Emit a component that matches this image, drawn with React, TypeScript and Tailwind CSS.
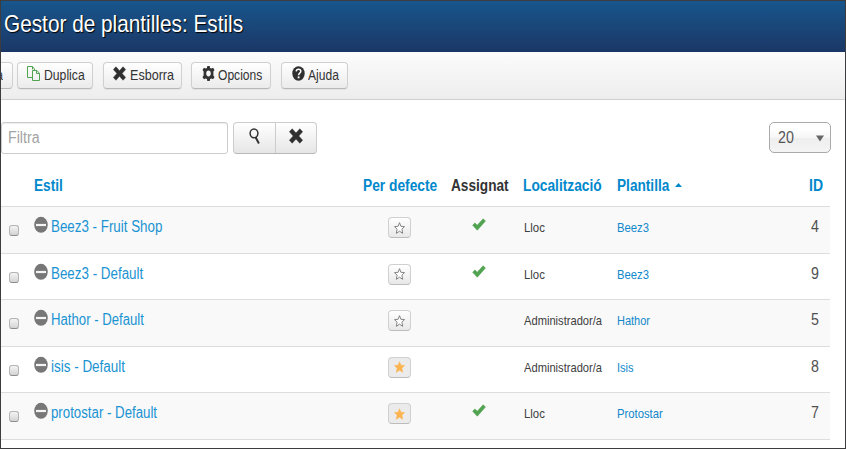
import { useLayoutEffect, useRef, useState, type ReactNode } from "react";

type FitProps = { w: number; className?: string; children: string };

// Condenses a label horizontally so that it fills the given width.
function Fit({ w, className = "", children }: FitProps) {
  const ref = useRef<HTMLSpanElement>(null);
  const [scale, setScale] = useState(0.85);
  useLayoutEffect(() => {
    if (ref.current) setScale(w / ref.current.offsetWidth);
  }, [w, children]);
  return (
    <span className={`block shrink-0 ${className}`} style={{ width: w }}>
      <span
        ref={ref}
        className="inline-block origin-left whitespace-nowrap align-top"
        style={{ transform: `scaleX(${scale})` }}
      >
        {children}
      </span>
    </span>
  );
}

const CopyIcon = () => (
  <svg className="h-[15px] w-[13px]" viewBox="0 0 13 15" fill="none" stroke="#51a351" strokeWidth="1">
    <path d="M5 11.5H.5V.5H5.5L7.5 3V4" />
    <path d="M5.5 4.5H10L12.5 7.5V14.5H5.5ZM9.5 4.5V7.5H12.5M5.5.5V3.5" />
  </svg>
);

const CrossIcon = ({ className = "" }: { className?: string }) => (
  <svg className={className} viewBox="0 0 14 16" preserveAspectRatio="none" fill="#2f2f2f">
    <path d="M3.2.8 7 5 10.8.8 13.6 3.8 9.8 8 13.6 12.2 10.8 15.2 7 11 3.2 15.2.4 12.2 4.2 8 .4 3.8Z" stroke="#2f2f2f" strokeWidth=".5" strokeLinejoin="round" />
  </svg>
);

const CogIcon = () => (
  <svg className="h-[15px] w-[13px]" viewBox="0 0 13 15" fill="#333">
    <path
      fillRule="evenodd"
      d="M5.3 0h2.4l.4 2 1.2.6 1.8-.9 1.4 2.2-1.1 1.7v3.8l1.1 1.7-1.4 2.2-1.8-.9-1.2.6-.4 2H5.3l-.4-2-1.2-.6-1.8.9L.5 11.1l1.1-1.7V5.6L.5 3.9l1.4-2.2 1.8.9L4.9 2ZM6.5 4.6C5.1 4.6 4.2 5.9 4.2 7.5S5.1 10.4 6.5 10.4 8.8 9.1 8.8 7.5 7.9 4.6 6.5 4.6Z"
    />
  </svg>
);

const HelpIcon = () => (
  <svg className="h-[15px] w-[13px]" viewBox="0 0 13 15">
    <ellipse cx="6.5" cy="7.5" rx="6.2" ry="7.3" fill="#2f2f2f" />
    <path d="M4.2 5.4C4.3 3.8 5.3 3.2 6.600 3.2 8 3.2 8.8 4 8.8 5.2 8.8 6.9 6.7 7 6.6 9.2" fill="none" stroke="#fff" strokeWidth="1.5" />
    <rect x="5.7" y="10.4" width="1.8" height="1.9" fill="#fff" />
  </svg>
);

const SearchIcon = () => (
  <svg className="h-4 w-[11px]" viewBox="0 0 11 16" fill="none" stroke="#333">
    <ellipse cx="5" cy="5.3" rx="3.9" ry="4.4" strokeWidth="1.5" />
    <path d="M6.6 9.3 9.9 15.4" strokeWidth="2" />
  </svg>
);

const MinusCircle = () => (
  <svg className="h-[17px] w-[14px]" viewBox="0 0 14 17">
    <ellipse cx="7" cy="8.8" rx="6.8" ry="8" fill="#777" />
    <rect x="2" y="7.9" width="10" height="2.2" fill="#f4f4f4" />
  </svg>
);

const CheckIcon = () => (
  <svg className="h-[13px] w-[14px]" viewBox="0 0 14 13" fill="#51a351">
    <path d="M.7 7.3 2.9 4.900 5.2 7.3 11.200.8 13.4 3.1 5.3 12.2Z" stroke="#51a351" strokeWidth=".6" strokeLinejoin="round" />
  </svg>
);

const Star = ({ on }: { on: boolean }) => (
  <svg className="h-3 w-[11px]" viewBox="0 0 11 12">
    <path
      d="M5.5.7 6.9 4.3 10.5 4.6 7.9 7.2 8.7 11.300 5.5 9.2 2.300 11.3 3.1 7.2.5 4.6 4.1 4.3Z"
      fill={on ? "#fbb450" : "#fff"}
      stroke={on ? "#fbb450" : "#777"}
      strokeWidth={on ? 0.5 : 0.9}
    />
  </svg>
);

type ToolProps = { icon: ReactNode; label: string; box: string; w: number };
const Tool = ({ icon, label, box, w }: ToolProps) => (
  <button
    className={`flex h-[27px] shrink-0 rounded-[4px] border border-[#d0d0d0] border-b-[#b8b8b8] bg-linear-to-b from-white to-[#ebebeb] pt-[3px] shadow-[0_1px_1px_rgba(0,0,0,0.06)] ${box}`}
  >
    {icon}
    <Fit w={w} className="ml-[3.5px] mt-[1px] h-4 text-left text-[14px] leading-4 text-[#333]">{label}</Fit>
  </button>
);

const rows = [
  { name: "Beez3 - Fruit Shop", w: 111, on: false, check: true, loc: "Lloc", lw: 21, tpl: "Beez3", tw: 32, id: "4" },
  { name: "Beez3 - Default", w: 92, on: false, check: true, loc: "Lloc", lw: 21, tpl: "Beez3", tw: 32, id: "9" },
  { name: "Hathor - Default", w: 93, on: false, check: false, loc: "Administrador/a", lw: 78, tpl: "Hathor", tw: 33, id: "5" },
  { name: "isis - Default", w: 74, on: true, check: false, loc: "Administrador/a", lw: 78, tpl: "Isis", tw: 17, id: "8" },
  { name: "protostar - Default", w: 106, on: true, check: true, loc: "Lloc", lw: 21, tpl: "Protostar", tw: 46, id: "7" },
];

const cols = "grid grid-cols-[33px_328px_88px_73px_93px_190px_1fr]";

export default function App() {
  return (
    <div className="flex h-[449px] w-[846px] flex-col overflow-hidden border border-[#3d3c3f] bg-white font-['Liberation_Sans',sans-serif]">
      <header className="h-[51px] shrink-0 border-b border-[#1b3564] bg-linear-to-b from-[#17568c] to-[#1a3867] pl-[2.5px] pt-[9px]">
        <h1>
          <Fit w={239} className="h-7 text-[24px] leading-7 text-white [text-shadow:1px_1px_1px_#000]">
            Gestor de plantilles: Estils
          </Fit>
        </h1>
      </header>

      <div className="flex h-12 shrink-0 border-b border-[#d0d0d0] bg-linear-to-b from-[#fcfcfc] to-[#ededed] pt-[10px]">
        <button className="mr-1 flex h-[27px] w-3 shrink-0 items-start rounded-r-[4px] border border-l-0 border-[#d0d0d0] border-b-[#b8b8b8] bg-linear-to-b from-white to-[#ebebeb] pt-1">
          <Fit w={6} className="-ml-[4px] h-4 text-left text-[14px] leading-4 text-[#333]">a</Fit>
        </button>
        <Tool icon={<CopyIcon />} label="Duplica" box="w-[76px] mr-[10px] pl-[9px]" w={41} />
        <Tool icon={<CrossIcon className="h-[15px] w-[13px]" />} label="Esborra" box="w-[79px] mr-[9px] pl-[9px]" w={44} />
        <Tool icon={<CogIcon />} label="Opcions" box="w-[80px] mr-[10px] pl-[9.5px]" w={44} />
        <Tool icon={<HelpIcon />} label="Ajuda" box="w-[67px] pl-[9.5px]" w={31} />
      </div>

      <div className="mt-[22px] flex h-8 shrink-0 items-start pr-[14px]">
        <div className="h-8 w-[227px] rounded-[3px] border border-[#ccc] pl-[6px] pt-[5px] shadow-[inset_0_1px_1px_rgba(0,0,0,0.075)]">
          <Fit w={32} className="h-5 text-[16px] leading-5 text-[#a3a3a3]">Filtra</Fit>
        </div>
        <div className="ml-[5px] flex h-8 w-[84px] rounded-[4px] border border-[#ccc] border-b-[#b8b8b8] bg-linear-to-b from-white to-[#e6e6e6]">
          <button className="flex w-[42px] justify-center border-r border-[#ccc] pt-[5px]"><SearchIcon /></button>
          <button className="flex flex-1 justify-center pt-[5px]"><CrossIcon className="h-[16px] w-[14px]" /></button>
        </div>
        <div className="ml-auto flex h-[31px] w-[62px] rounded-[5px] border border-[#aaa] bg-[linear-gradient(#fff_20%,#f6f6f6_50%,#eee_52%,#f4f4f4_100%)] pl-[7.5px] pt-[5px]">
          <Fit w={16} className="h-5 text-[16px] leading-5 text-[#555]">20</Fit>
          <svg className="ml-[22px] mt-[7px] h-[7px] w-2" viewBox="0 0 8 7" fill="#666"><path d="M0 .5H8L4 6.5Z" /></svg>
        </div>
      </div>

      <div className="w-[829px] shrink-0">
        <div className={`${cols} h-[52px] pt-[22px] text-[16px] font-bold leading-5 text-[#08c]`}>
          <span />
          <Fit w={29}>Estil</Fit>
          <Fit w={74} className="ml-[0.5px]">Per defecte</Fit>
          <Fit w={58} className="ml-[0.5px] text-[#333]">Assignat</Fit>
          <Fit w={79}>Localització</Fit>
          <div className="flex">
            <Fit w={52} className="ml-[0.5px]">Plantilla</Fit>
            <svg className="ml-[6px] mt-[7px] h-1 w-[7px]" viewBox="0 0 7 4" fill="#08c"><path d="M0 4H7L3.5 0Z" /></svg>
          </div>
          <Fit w={14} className="ml-[2.5px]">ID</Fit>
        </div>
        {rows.map((r, i) => (
          <div
            key={r.name}
            className={`${cols} h-[46.5px] border-t border-[#ddd] ${i % 2 ? "bg-white" : "bg-[#f9f9f9]"}`}
          >
            <span className="ml-2 mt-[18px] h-[11px] w-[10px] rounded-[3px] border border-[#b4b4b4] border-b-[#8c8c8c] bg-linear-to-b from-[#f4f4f4] to-[#d4d4d4]" />
            <div className="flex pt-[9px]">
              <MinusCircle />
              <Fit w={r.w} className="ml-[3px] mt-[1px] h-5 text-[16px] leading-5 text-[#1a93d2]">{r.name}</Fit>
            </div>
            <span
              className={`ml-[26px] mt-[10px] flex h-[21px] w-[23px] items-center justify-center rounded-[4px] border border-[#d0d0d0] border-b-[#bcbcbc] ${r.on ? "bg-[#ebebeb]" : "bg-linear-to-b from-white to-[#e8e8e8]"}`}
            >
              <Star on={r.on} />
            </span>
            <span className="pl-[22px] pt-[11px]">{r.check && <CheckIcon />}</span>
            <Fit w={r.lw} className="ml-[0.5px] mt-[13px] h-4 text-[13px] leading-4 text-[#404040]">{r.loc}</Fit>
            <Fit w={r.tw} className="ml-[0.5px] mt-[13px] h-4 text-[13px] leading-4 text-[#1088cb]">{r.tpl}</Fit>
            <Fit w={8} className="ml-[5px] mt-[10px] h-5 text-[16px] leading-5 text-[#505050]">{r.id}</Fit>
          </div>
        ))}
        <div className="border-t border-[#ddd]" />
      </div>
    </div>
  );
}
